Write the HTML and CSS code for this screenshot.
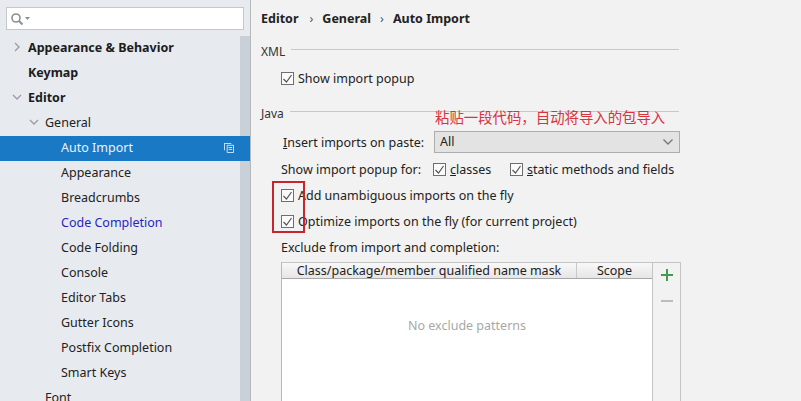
FILE: index.html
```html
<!DOCTYPE html>
<html lang="en">
<head>
<meta charset="utf-8">
<title>Auto Import</title>
<link rel="stylesheet" href="styles.css">
</head>
<body>
<div class="app">
  <aside class="sidebar">
    <div class="search">
      <svg class="search-icon" width="20" height="14" viewBox="0 0 20 14"><circle cx="6" cy="6" r="4" fill="none" stroke="#8c8f92" stroke-width="1.6"/><path d="M9 9l3.5 3.5" stroke="#8c8f92" stroke-width="2"/><path d="M15 5h5l-2.500 3z" fill="#8c8f92"/></svg>
    </div>
    <div class="tree-wrap">
      <ul class="tree">
        <li class="row bold l0"><svg class="arrow" width="10" height="10" viewBox="0 0 10 10"><path d="M3 1l4 4-4 4" fill="none" stroke="#9a9da0" stroke-width="1.300"/></svg>Appearance &amp; Behavior</li>
        <li class="row bold l0">Keymap</li>
        <li class="row bold l0"><svg class="arrow" width="10" height="10" viewBox="0 0 10 10"><path d="M1 3l4 4 4-4" fill="none" stroke="#9a9da0" stroke-width="1.300"/></svg>Editor</li>
        <li class="row l1"><svg class="arrow" width="10" height="10" viewBox="0 0 10 10"><path d="M1 3l4 4 4-4" fill="none" stroke="#9a9da0" stroke-width="1.300"/></svg>General</li>
        <li class="row l2 selected">Auto Import<svg class="copy" width="10" height="10" viewBox="0 0 11 11"><path d="M3.500 2.500h7v8h-7z M1 .5h7M.5 0v8" fill="none" stroke="#dcebf7"/><path d="M5 5h4M5 7h4" stroke="#dcebf7"/></svg></li>
        <li class="row l2">Appearance</li>
        <li class="row l2">Breadcrumbs</li>
        <li class="row l2 link">Code Completion</li>
        <li class="row l2">Code Folding</li>
        <li class="row l2">Console</li>
        <li class="row l2">Editor Tabs</li>
        <li class="row l2">Gutter Icons</li>
        <li class="row l2">Postfix Completion</li>
        <li class="row l2">Smart Keys</li>
        <li class="row l1">Font</li>
      </ul>
      <div class="scrollbar"></div>
    </div>
  </aside>
  <main class="content">
    <div class="crumbs"><span>Editor</span><i>›</i><span>General</span><i>›</i><span>Auto Import</span></div>
    <div class="legend legend-xml"><span>XML</span><b></b></div>
    <label class="check-row first"><span class="cb"><svg width="11" height="10" viewBox="0 0 11 10"><path d="M1.500 5l3 3 5-7" fill="none" stroke="#555" stroke-width="1.200"/></svg></span>Show import popup</label>
    <div class="legend legend-java"><span>Java</span><b></b></div>
    <div class="insert-row">
      <span class="insert-label"><u>I</u>nsert imports on paste:</span>
      <div class="select"><span>All</span><svg width="12" height="8" viewBox="0 0 12 8"><path d="M1.500 1.500L6 6l4.500-4.500" fill="none" stroke="#777" stroke-width="1.400"/></svg></div>
    </div>
    <div class="popup-row">
      <span class="popup-label">Show import popup for:</span>
      <label class="inline inline-classes"><span class="cb"><svg width="11" height="10" viewBox="0 0 11 10"><path d="M1.500 5l3 3 5-7" fill="none" stroke="#555" stroke-width="1.200"/></svg></span><span><u>c</u>lasses</span></label>
      <label class="inline"><span class="cb"><svg width="11" height="10" viewBox="0 0 11 10"><path d="M1.500 5l3 3 5-7" fill="none" stroke="#555" stroke-width="1.200"/></svg></span><span><u>s</u>tatic methods and fields</span></label>
    </div>
    <label class="check-row add"><span class="cb"><svg width="11" height="10" viewBox="0 0 11 10"><path d="M1.500 5l3 3 5-7" fill="none" stroke="#555" stroke-width="1.200"/></svg></span>Add unambiguous imports on the fly</label>
    <label class="check-row opt"><span class="cb"><svg width="11" height="10" viewBox="0 0 11 10"><path d="M1.500 5l3 3 5-7" fill="none" stroke="#555" stroke-width="1.200"/></svg></span>Optimize imports on the fly (for current project)</label>
    <div class="exclude-label">Exclude from import and completion:</div>
    <div class="table">
      <div class="table-main">
        <div class="thead"><div class="th th-name">Class/package/member qualified name mask</div><div class="th th-scope">Scope</div></div>
        <div class="tbody">No exclude patterns</div>
      </div>
      <div class="tools">
        <svg width="14" height="14" viewBox="0 0 14 14"><path d="M7 1v12M1 7h12" stroke="#3f9c50" stroke-width="2"/></svg>
        <svg width="14" height="14" viewBox="0 0 14 14"><path d="M1 7h12" stroke="#bcbcbc" stroke-width="2"/></svg>
      </div>
    </div>
  </main>
</div>
<div class="note">粘贴一段代码，自动将导入的包导入</div>
<div class="redbox"></div>
</body>
</html>
```

FILE: styles.css
```css
* { box-sizing: border-box; }
html, body { margin: 0; padding: 0; height: 401px; overflow: hidden; }
body { position: relative; font: 12.5px/25px "Noto Sans", "Noto Sans CJK SC", sans-serif; color: #222; background: #f2f2f2; }
.app { display: flex; height: 401px; }
.sidebar { width: 251px; flex: none; background: #e7ebf0; border-right: 1px solid #b5b7ba; display: flex; flex-direction: column; padding-top: 7px; }
.search { margin-left: 6px; width: 238px; height: 23px; flex: none; background: #fff; border: 1px solid #c4c7ca; display: flex; align-items: center; padding-left: 3px; }
.tree-wrap { display: flex; flex: 1; margin-top: 6px; min-height: 0; }
.tree { list-style: none; margin: 0; padding: 0; flex: 1; min-width: 0; }
.row { height: 25px; display: flex; align-items: center; position: relative; white-space: nowrap; padding-bottom: 2px; }
.arrow { position: absolute; }
.l0 { padding-left: 28px; }
.l0 .arrow { left: 12px; top: 6px; }
.l1 { padding-left: 45px; }
.l1 .arrow { left: 29px; top: 6px; }
.l2 { padding-left: 61px; }
.bold { font-weight: 700; color: #1c1c1c; }
.link { color: #2a1fc0; }
.selected { background: #1a79c4; color: #e9f3fb; margin-right: -10px; z-index: 1; }
.copy { position: absolute; right: 16px; top: 7px; }
.scrollbar { width: 10px; flex: none; background: #c9d0d8; }
.content { flex: 1; min-width: 0; padding: 6px 0 0 10px; }
.crumbs { display: flex; font-weight: 700; color: #222; height: 25px; align-items: center; }
.crumbs i { font-style: normal; font-weight: 400; color: #555; margin: 0 9px 0 11px; }
.crumbs i:last-of-type { margin-left: 9px; }
.legend { display: flex; align-items: center; height: 16px; width: 418px; color: #333; font-size: 12px; }
.legend b { flex: 1; height: 1px; background: #c8c8c8; margin: 0 0 3px 6px; }
.legend-xml { margin-top: 12px; }
.legend-java { margin-top: 14px; }
.check-row { display: flex; align-items: center; height: 25px; }
.cb { width: 13px; height: 13px; flex: none; border: 1px solid #6e6e6e; background: #fbfbfb; display: flex; align-items: center; justify-content: center; margin-right: 4px; }
.first { padding-left: 20px; margin-top: 7px; }
.insert-row { display: flex; align-items: center; margin-top: 8px; height: 25px; padding-left: 22px; }
.insert-label { width: 151px; flex: none; padding-top: 2px; }
.select { width: 246px; height: 22px; background: #e3e3e3; border: 1px solid #adadad; display: flex; align-items: center; justify-content: space-between; padding: 0 5px; }
.popup-row { display: flex; align-items: center; height: 25px; padding-left: 20px; margin-top: 3px; }
.popup-label { width: 152px; flex: none; }
.inline { display: flex; align-items: center; }
.inline-classes { width: 77px; flex: none; }
.add { padding-left: 20px; margin-top: 1px; }
.opt { padding-left: 20px; margin-top: 1px; }
.exclude-label { padding-left: 20px; margin-top: 1px; height: 25px; }
.table { margin: 2px 0 0 20px; width: 400px; height: 150px; display: flex; border: 1px solid #c4c4c4; border-left-color: #b8b8b8; border-bottom: 0; }
.table-main { width: 371px; flex: none; border-right: 1px solid #c4c4c4; display: flex; flex-direction: column; }
.thead { display: flex; height: 16px; line-height: 15px; background: linear-gradient(#f8f8f8, #e6e6e6); border-bottom: 1px solid #a8a8a8; text-align: center; }
.th-name { width: 295px; flex: none; border-right: 1px solid #c8c8c8; }
.th-scope { flex: 1; }
.tbody { flex: 1; background: #fff; color: #a8a8a8; text-align: center; padding-top: 34px; }
.tools { flex: 1; display: flex; flex-direction: column; align-items: center; gap: 12px; padding-top: 5px; }
.note { position: absolute; left: 435px; top: 104px; color: #d9333f; line-height: 25px; font-size: 14.4px; font-family: "Noto Sans CJK SC", sans-serif; white-space: nowrap; }
.redbox { position: absolute; left: 272px; top: 181px; width: 33px; height: 52px; border: 2px solid #c8242f; }
```
